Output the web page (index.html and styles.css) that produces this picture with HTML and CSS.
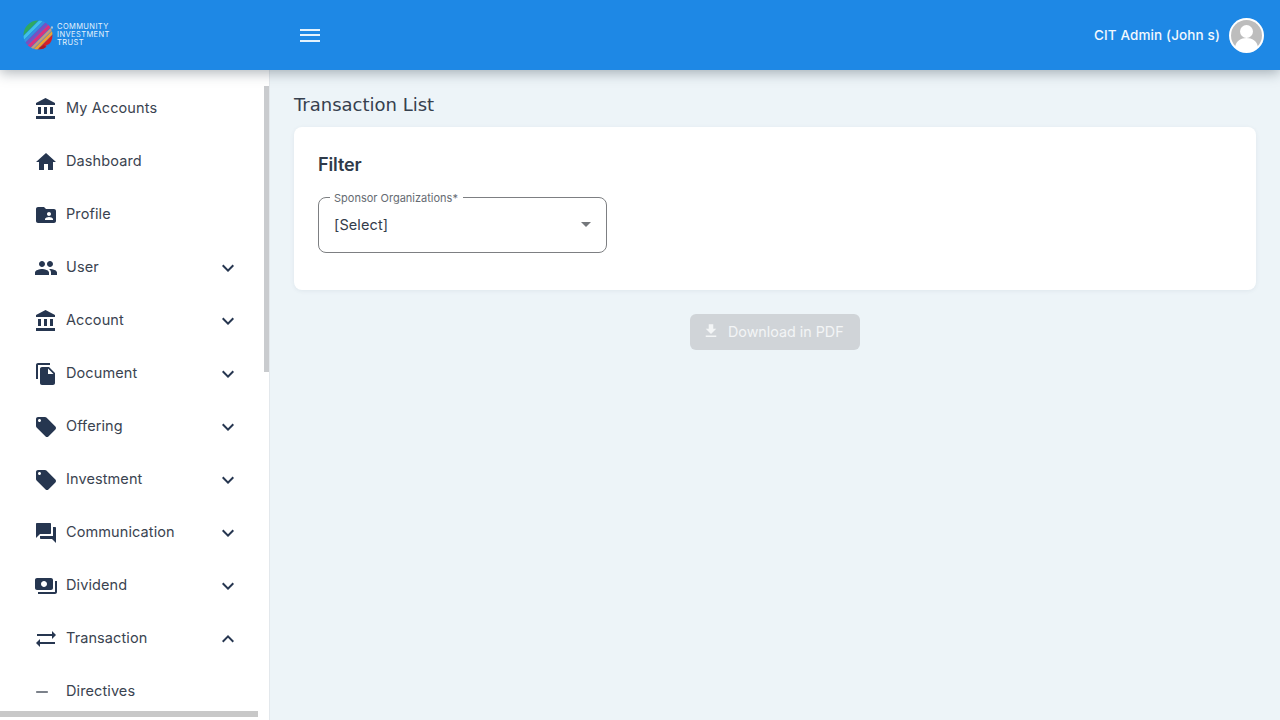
FILE: index.html
```html
<!DOCTYPE html>
<html lang="en">
<head>
<meta charset="utf-8">
<title>Transaction List</title>
<link rel="stylesheet" href="styles.css">
</head>
<body>
<header class="topbar">
  <div class="brand">
    <svg class="brand-mark" viewBox="0 0 30 32" width="30" height="32">
      <defs><clipPath id="disc"><circle cx="15" cy="16" r="14.5"/></clipPath></defs>
      <g clip-path="url(#disc)" fill="none">
        <path d="M-4 17.700L17.700-4" stroke="#2fa860" stroke-width="4.600"/>
        <path d="M-4 23.700L23.700-4" stroke="#40c0e8" stroke-width="3"/>
        <path d="M-4 28L28-4" stroke="#3a8fe0" stroke-width="2"/>
        <path d="M-4 32.200L32.200-4" stroke="#7a4fc0" stroke-width="3"/>
        <path d="M-4 37.500L37.500-4" stroke="#d9317f" stroke-width="3.500"/>
        <path d="M-4 42.400L42.400-4" stroke="#c79a78" stroke-width="2.500"/>
        <path d="M-4 47L47-4" stroke="#eda031" stroke-width="3"/>
        <path d="M-4 52.700L52.700-4" stroke="#d3202a" stroke-width="5"/>
        <path d="M23 26.500l8-4v10h-8z" fill="#1e88e5"/>
        <path d="M16 29l5-3 2 2-2 4z" fill="#a81a28"/>
      </g>
      <circle cx="29" cy="8.500" r="1.200" fill="#a9c4d8"/>
    </svg>
    <div class="brand-text"><span>COMMUNITY</span><span>INVESTMENT</span><span>TRUST</span></div>
  </div>
  <button class="menu-toggle" aria-label="Menu"><i></i><i></i><i></i></button>
  <div class="user">
    <span class="user-name">CIT Admin (John s)</span>
    <svg class="avatar" viewBox="0 0 35 35" width="35" height="35">
      <circle cx="17.500" cy="17.500" r="17.500" fill="#fff"/>
      <circle cx="17.500" cy="17.500" r="15.500" fill="#bdbdbd"/>
      <circle cx="17.500" cy="13.500" r="6.500" fill="#fff"/>
      <path d="M6 29c1-6 6-9 11.500-9s10.500 3 11.500 9a15.500 15.500 0 0 1-23 0z" fill="#fff"/>
    </svg>
  </div>
</header>
<div class="shell">
  <aside class="sidebar">
    <nav class="nav">
      <a class="nav-item"><svg class="ico" viewBox="0 0 24 24"><path d="M4 10v7h3v-7H4zm6 0v7h3v-7h-3zM2 22h19v-3H2v3zm14-12v7h3v-7h-3zm-4.500-9L2 6v2h19V6l-9.500-5z"/></svg><span class="nav-label">My Accounts</span></a>
      <a class="nav-item"><svg class="ico" viewBox="0 0 24 24"><path d="M10 20v-6h4v6h5v-8h3L12 3 2 12h3v8z"/></svg><span class="nav-label">Dashboard</span></a>
      <a class="nav-item"><svg class="ico" viewBox="0 0 24 24"><path d="M20 6h-8l-2-2H4c-1.100 0-1.990.9-1.990 2L2 18c0 1.100.9 2 2 2h16c1.100 0 2-.9 2-2V8c0-1.100-.9-2-2-2zm-5 3c1.100 0 2 .9 2 2s-.9 2-2 2-2-.9-2-2 .9-2 2-2zm4 8h-8v-1c0-1.330 2.670-2 4-2s4 .67 4 2v1z"/></svg><span class="nav-label">Profile</span></a>
      <a class="nav-item"><svg class="ico" viewBox="0 0 24 24"><path d="M16 11c1.660 0 2.990-1.340 2.990-3S17.660 5 16 5c-1.660 0-3 1.340-3 3s1.340 3 3 3zm-8 0c1.660 0 2.990-1.340 2.990-3S9.660 5 8 5C6.340 5 5 6.340 5 8s1.340 3 3 3zm0 2c-2.330 0-7 1.170-7 3.500V19h14v-2.500c0-2.330-4.670-3.500-7-3.500zm8 0c-.29 0-.62.02-.97.05 1.160.84 1.970 1.970 1.970 3.450V19h6v-2.500c0-2.330-4.670-3.500-7-3.500z"/></svg><span class="nav-label">User</span><svg class="chev" viewBox="0 0 24 24"><path d="M16.590 8.590L12 13.170 7.410 8.590 6 10l6 6 6-6z"/></svg></a>
      <a class="nav-item"><svg class="ico" viewBox="0 0 24 24"><path d="M4 10v7h3v-7H4zm6 0v7h3v-7h-3zM2 22h19v-3H2v3zm14-12v7h3v-7h-3zm-4.500-9L2 6v2h19V6l-9.500-5z"/></svg><span class="nav-label">Account</span><svg class="chev" viewBox="0 0 24 24"><path d="M16.590 8.590L12 13.170 7.410 8.590 6 10l6 6 6-6z"/></svg></a>
      <a class="nav-item"><svg class="ico" viewBox="0 0 24 24"><path d="M16 1H4c-1.100 0-2 .9-2 2v14h2V3h12V1zm-1 4l6 6v10c0 1.100-.9 2-2 2H7.990C6.890 23 6 22.100 6 21l.01-14c0-1.100.89-2 1.990-2h7zm-1 7h5.500L14 6.500V12z"/></svg><span class="nav-label">Document</span><svg class="chev" viewBox="0 0 24 24"><path d="M16.590 8.590L12 13.170 7.410 8.590 6 10l6 6 6-6z"/></svg></a>
      <a class="nav-item"><svg class="ico" viewBox="0 0 24 24"><path d="M21.410 11.580l-9-9C12.050 2.220 11.550 2 11 2H4c-1.100 0-2 .9-2 2v7c0 .55.22 1.050.59 1.420l9 9c.36.36.86.58 1.410.58.55 0 1.050-.22 1.410-.59l7-7c.37-.36.59-.86.59-1.410 0-.55-.23-1.060-.59-1.420zM5.500 7C4.670 7 4 6.330 4 5.500S4.670 4 5.500 4 7 4.670 7 5.500 6.330 7 5.500 7z"/></svg><span class="nav-label">Offering</span><svg class="chev" viewBox="0 0 24 24"><path d="M16.590 8.590L12 13.170 7.410 8.590 6 10l6 6 6-6z"/></svg></a>
      <a class="nav-item"><svg class="ico" viewBox="0 0 24 24"><path d="M21.410 11.580l-9-9C12.050 2.220 11.550 2 11 2H4c-1.100 0-2 .9-2 2v7c0 .55.22 1.050.59 1.420l9 9c.36.36.86.58 1.410.58.55 0 1.050-.22 1.410-.59l7-7c.37-.36.59-.86.59-1.410 0-.55-.23-1.060-.59-1.420zM5.500 7C4.670 7 4 6.330 4 5.500S4.670 4 5.500 4 7 4.670 7 5.500 6.330 7 5.500 7z"/></svg><span class="nav-label">Investment</span><svg class="chev" viewBox="0 0 24 24"><path d="M16.590 8.590L12 13.170 7.410 8.590 6 10l6 6 6-6z"/></svg></a>
      <a class="nav-item"><svg class="ico" viewBox="0 0 24 24"><path d="M21 6h-2v9H6v2c0 .55.45 1 1 1h11l4 4V7c0-.55-.45-1-1-1zm-4 6V3c0-.55-.45-1-1-1H3c-.55 0-1 .45-1 1v14l4-4h10c.55 0 1-.45 1-1z"/></svg><span class="nav-label">Communication</span><svg class="chev" viewBox="0 0 24 24"><path d="M16.590 8.590L12 13.170 7.410 8.590 6 10l6 6 6-6z"/></svg></a>
      <a class="nav-item"><svg class="ico" viewBox="0 0 24 24"><path d="M19 14V6c0-1.100-.9-2-2-2H3c-1.100 0-2 .9-2 2v8c0 1.100.9 2 2 2h14c1.100 0 2-.9 2-2zm-9-1c-1.660 0-3-1.340-3-3s1.340-3 3-3 3 1.340 3 3-1.340 3-3 3zm13-6v11c0 1.100-.9 2-2 2H4v-2h17V7h2z"/></svg><span class="nav-label">Dividend</span><svg class="chev" viewBox="0 0 24 24"><path d="M16.590 8.590L12 13.170 7.410 8.590 6 10l6 6 6-6z"/></svg></a>
      <a class="nav-item"><svg class="ico" viewBox="0 0 24 24"><path d="M22 8l-4-4v3H3v2h15v3l4-4zM2 16l4 4v-3h15v-2H6v-3l-4 4z"/></svg><span class="nav-label">Transaction</span><svg class="chev" viewBox="0 0 24 24"><path d="M12 8l-6 6 1.410 1.410L12 10.830l4.590 4.580L18 14z"/></svg></a>
      <a class="nav-item"><svg class="ico dash" viewBox="0 0 24 24"><path d="M5 11.200h14v1.600H5z"/></svg><span class="nav-label">Directives</span></a>
    </nav>
    <div class="thumb-v"></div>
    <div class="thumb-h"></div>
  </aside>
  <main class="content">
    <h1 class="page-title">Transaction List</h1>
    <section class="card">
      <h2 class="card-title">Filter</h2>
      <fieldset class="field">
        <legend class="field-label">Sponsor Organizations*</legend>
        <span class="field-value">[Select]</span>
        <svg class="caret" viewBox="0 0 10 5" width="10" height="5"><path d="M0 0h10L5 5z"/></svg>
      </fieldset>
    </section>
    <div class="actions">
      <button class="btn-download" disabled>
        <svg viewBox="0 0 24 24" width="18" height="18"><path d="M19 9h-4V3H9v6H5l7 7 7-7zM5 18v2h14v-2H5z"/></svg>
        <span>Download in PDF</span>
      </button>
    </div>
  </main>
</div>
</body>
</html>
```

FILE: styles.css
```css
* { box-sizing: border-box; }
html, body { height: 100%; }
body {
  margin: 0;
  height: 720px;
  overflow: hidden;
  display: flex;
  flex-direction: column;
  background: #edf4f8;
  color: #2f3a4a;
  font-family: Inter, "Noto Sans", sans-serif;
}
.topbar {
  position: relative;
  z-index: 2;
  flex: none;
  height: 70px;
  display: flex;
  align-items: center;
  padding: 0 16px 0 23px;
  background: #1e88e5;
  box-shadow: 0 3px 12px rgba(30, 45, 60, .35);
}
.brand { width: 277px; display: flex; align-items: center; gap: 4px; }
.brand-mark { flex: none; }
.brand-text {
  display: flex;
  flex-direction: column;
  font-size: 7.500px;
  line-height: 7.700px;
  letter-spacing: .4px;
  color: #e4f2fc;
}
.menu-toggle {
  width: 20px;
  height: 13px;
  padding: 0;
  border: 0;
  background: none;
  display: flex;
  flex-direction: column;
  justify-content: space-between;
}
.menu-toggle i { display: block; height: 2px; background: #e3f2fd; }
.user { margin-left: auto; display: flex; align-items: center; gap: 9px; }
.user-name { font-size: 13.500px; font-weight: 500; letter-spacing: .12px; color: #f2f8fe; }
.avatar { display: block; }
.shell { flex: 1; min-height: 0; display: flex; }
.sidebar {
  position: relative;
  flex: none;
  width: 270px;
  overflow: hidden;
  background: #fff;
  border-right: 1px solid #e3e8ec;
}
.nav { padding-top: 12px; display: flex; flex-direction: column; }
.nav-item {
  flex: none;
  height: 53px;
  display: flex;
  align-items: center;
  gap: 8px;
  padding: 0 29px 0 34px;
  font-size: 14.500px;
  letter-spacing: .1px;
  color: #3a4350;
}
.nav-label { flex: 1; padding-bottom: 2px; }
.ico { flex: none; width: 24px; height: 24px; fill: #263650; }
.ico.dash { width: 20px; height: 20px; margin: 0 6px 0 -2px; fill: #3a4350; }
.chev { flex: none; width: 24px; height: 24px; fill: #263650; }
.thumb-v { position: absolute; top: 16px; right: 0; width: 5px; height: 286px; background: #c9cbce; }
.thumb-h { position: absolute; left: 0; top: 641px; width: 258px; height: 6px; background: #c8c8c8; }
.content { flex: 1; min-width: 0; padding: 24px 24px 0; }
.page-title {
  margin: 0 0 11px;
  font: 400 18px/22px "DejaVu Sans", sans-serif;
  color: #36404e;
}
.card {
  height: 163px;
  padding: 26px 24px 0;
  background: #fff;
  border-radius: 8px;
  box-shadow: 0 1px 4px rgba(60, 80, 100, .08);
}
.card-title { margin: 0 0 15px; font-size: 18px; line-height: 24px; font-weight: 600; letter-spacing: -.1px; color: #2f3a4a; }
.field {
  position: relative;
  width: 289px;
  height: 63px;
  margin: -2px 0 0;
  padding: 0 15px 8px;
  display: flex;
  align-items: center;
  justify-content: space-between;
  border: 1px solid #7d7f82;
  border-radius: 8px;
}
.field-label { padding: 2px 5px 0 4px; margin-left: -4px; font-size: 11px; line-height: 13px; color: #666b72; }
.field-value { font-size: 14.500px; letter-spacing: .1px; color: #333c4a; }
.caret { fill: #74777b; }
.actions { display: flex; justify-content: center; margin-top: 24px; }
.btn-download {
  width: 170px;
  height: 36px;
  padding: 0 0 2px 12px;
  border: 0;
  border-radius: 6px;
  display: flex;
  align-items: center;
  gap: 8px;
  background: #d0d4d8;
  color: #f3f5f6;
  font-family: inherit;
  font-size: 14.300px;
}
.btn-download svg { fill: #f3f5f6; }
```
